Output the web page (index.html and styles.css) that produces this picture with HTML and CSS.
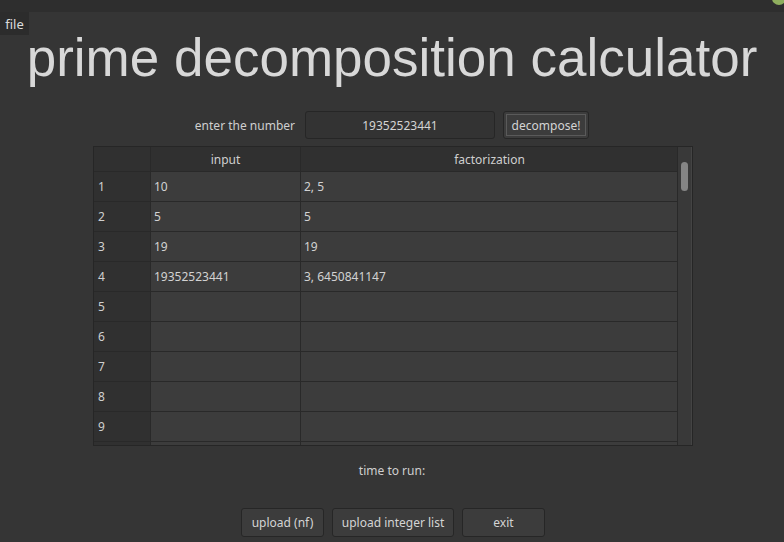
FILE: index.html
```html
<!DOCTYPE html>
<html>
<head>
<meta charset="utf-8">
<link rel="stylesheet" href="styles.css">
</head>
<body>
<div class="titlebar"><span class="dot"></span></div>
<div class="menubar"><span class="menu-item">file</span></div>
<h1 class="title">prime decomposition calculator</h1>
<div class="entry-row">
  <span class="label">enter the number</span>
  <div class="line-edit">19352523441</div>
  <div class="btn btn-focus"><span class="focus">decompose!</span></div>
</div>
<div class="table">
  <div class="grid">
    <div class="corner"></div>
    <div class="hcell">input</div>
    <div class="hcell">factorization</div>
    <div class="vh">1</div><div class="cell">10</div><div class="cell">2, 5</div>
    <div class="vh">2</div><div class="cell">5</div><div class="cell">5</div>
    <div class="vh">3</div><div class="cell">19</div><div class="cell">19</div>
    <div class="vh">4</div><div class="cell">19352523441</div><div class="cell">3, 6450841147</div>
    <div class="vh">5</div><div class="cell"></div><div class="cell"></div>
    <div class="vh">6</div><div class="cell"></div><div class="cell"></div>
    <div class="vh">7</div><div class="cell"></div><div class="cell"></div>
    <div class="vh">8</div><div class="cell"></div><div class="cell"></div>
    <div class="vh">9</div><div class="cell"></div><div class="cell"></div>
    <div class="vh"></div><div class="cell"></div><div class="cell"></div>
  </div>
  <div class="scrollbar"><div class="handle"></div></div>
</div>
<div class="time">time to run:</div>
<div class="buttons">
  <div class="btn b1">upload (nf)</div>
  <div class="btn b2">upload integer list</div>
  <div class="btn b3">exit</div>
</div>
</body>
</html>
```

FILE: styles.css
```css
html, body {
  margin: 0;
  padding: 0;
  background: #353535;
  width: 784px;
  height: 542px;
  overflow: hidden;
  font-family: "Noto Sans", sans-serif;
  font-size: 12px;
  color: #d2d2d2;
}
.titlebar {
  height: 12px;
  background: #2e2e2e;
  position: relative;
  overflow: hidden;
}
.dot {
  position: absolute;
  right: -2px;
  top: -8px;
  width: 14px;
  height: 13px;
  border-radius: 50%;
  background: #8fae5e;
}
.menubar {
  height: 23px;
  display: flex;
}
.menu-item {
  width: 29px;
  background: #2c2c2c;
  display: flex;
  align-items: center;
  justify-content: center;
  font-size: 13px;
  color: #dcdcdc;
}
.title {
  margin: 0;
  height: 76px;
  line-height: 46px;
  text-align: center;
  font-family: "Liberation Sans", Arial, sans-serif;
  font-weight: normal;
  font-size: 53px;
  color: #d8d8d8;
}
.entry-row {
  display: flex;
  align-items: center;
  height: 28px;
}
.label {
  width: 305px;
  text-align: right;
  padding-right: 10px;
  box-sizing: border-box;
  color: #cfcfcf;
}
.line-edit {
  width: 190px;
  height: 28px;
  box-sizing: border-box;
  border: 1px solid #262626;
  border-radius: 3px;
  background: #333333;
  display: flex;
  align-items: center;
  justify-content: center;
  color: #d4d4d4;
  margin-right: 8px;
}
.btn {
  box-sizing: border-box;
  border: 1px solid #262626;
  border-radius: 3px;
  background: #3c3c3c;
  display: flex;
  align-items: center;
  justify-content: center;
  color: #d4d4d4;
}
.btn-focus {
  width: 86px;
  height: 28px;
  padding: 2px;
}
.focus {
  flex: 1;
  align-self: stretch;
  border: 1px solid #5a5a5a;
  display: flex;
  align-items: center;
  justify-content: center;
}
.table {
  margin: 7px 0 0 93px;
  width: 600px;
  height: 300px;
  box-sizing: border-box;
  border: 1px solid #262626;
  background: #3b3b3b;
  display: flex;
  overflow: hidden;
}
.grid {
  width: 585px;
  display: grid;
  grid-template-columns: 56px 149px 377px;
  grid-template-rows: 24px;
  grid-auto-rows: 29px;
  gap: 1px;
  background: #292929;
  align-content: start;
  overflow: hidden;
  border-right: 1px solid #292929;
}
.corner, .hcell {
  background: #303030;
}
.hcell {
  display: flex;
  align-items: center;
  justify-content: center;
  color: #cfcfcf;
}
.vh {
  background: #303030;
  display: flex;
  align-items: center;
  padding-left: 4px;
  color: #cfcfcf;
}
.cell {
  background: #3c3c3c;
  display: flex;
  align-items: center;
  padding-left: 3px;
  color: #d2d2d2;
}
.scrollbar {
  width: 13px;
  background: #393939;
  border-right: 1px solid #444;
}
.handle {
  margin: 15px 0 0 3px;
  width: 7px;
  height: 29px;
  border-radius: 4px;
  background: #858585;
}
.time {
  margin-top: 16px;
  text-align: center;
  height: 17px;
  color: #cfcfcf;
}
.buttons {
  margin-top: 29px;
  display: flex;
  justify-content: center;
  gap: 8px;
  padding-left: 2px;
}
.b1, .b2, .b3 {
  height: 29px;
}
.b1 { width: 83px; }
.b2 { width: 122px; }
.b3 { width: 83px; }
```
